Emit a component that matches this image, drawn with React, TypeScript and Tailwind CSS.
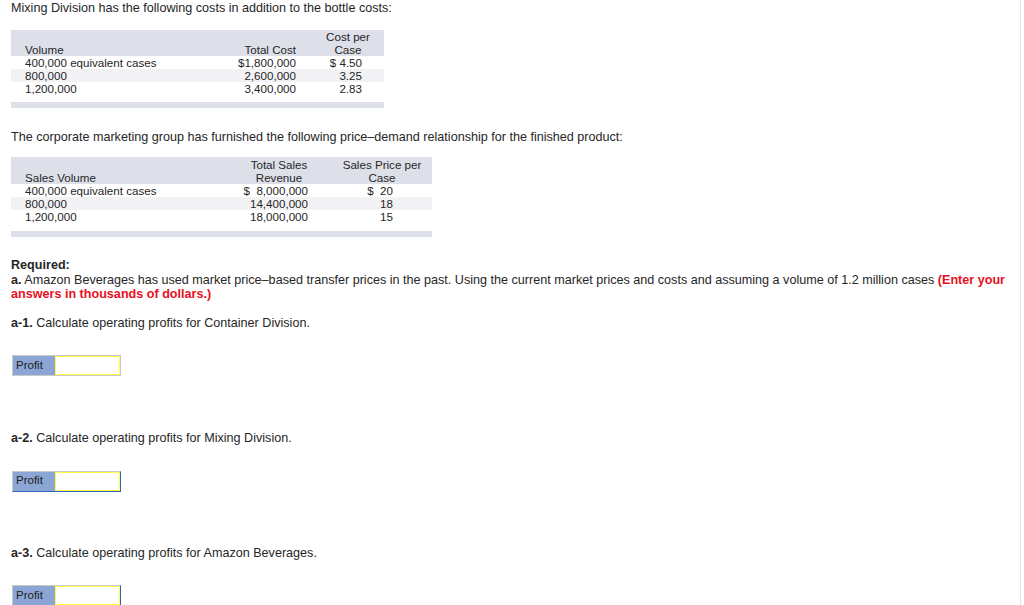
const Profit = ({ variant }: { variant: 'plain' | 'blueBottom' | 'blueRight' }) => {
  const edge =
    variant === 'blueBottom'
      ? 'border-r-[#2a63c4] border-b-[#2a63c4]'
      : variant === 'blueRight'
        ? 'border-r-[#2a63c4]'
        : ''
  return (
    <div className={`flex h-[21px] w-[109px] border border-[#c9c9c9] ${edge}`}>
      <div className="flex w-[42px] items-center bg-[#8ba6d4] pl-[3px] text-[11.5px] text-[#222]">Profit</div>
      <div className="flex-1 border border-[#ffff40] bg-white" />
    </div>
  )
}

const costRows = [
  ['400,000 equivalent cases', '$1,800,000', '$ 4.50'],
  ['800,000', '2,600,000', '3.25'],
  ['1,200,000', '3,400,000', '2.83']
]

const priceRows = [
  ['400,000 equivalent cases', '$\u00a0\u00a08,000,000', '$\u00a0\u00a020'],
  ['800,000', '14,400,000', '18'],
  ['1,200,000', '18,000,000', '15']
]

export default function App() {
  return (
    <div className="flex min-h-[605px] w-[1024px] bg-white font-['Liberation_Sans',Arial,sans-serif] text-[#262626]">
      <div className="w-[1021px] border-r border-[#e3e3e3] pl-[11px]">
        <p className="text-[12.6px] leading-[16px]">
          Mixing Division has the following costs in addition to the bottle costs:
        </p>

        <div className="mt-[14px] w-[373px] text-[11.6px] leading-[13px]">
          <div className="flex h-[26px] items-end bg-[#dde0e9]">
            <div className="w-[215px] pl-[14px]">Volume</div>
            <div className="w-[70px] text-right">Total Cost</div>
            <div className="ml-[16px] w-[72px] text-center">
              Cost per
              <br />
              Case
            </div>
          </div>
          {costRows.map((r, i) => (
            <div key={r[0]} className={`flex h-[13px] ${i === 1 ? 'bg-[#f2f2f5]' : ''}`}>
              <div className="w-[215px] pl-[14px]">{r[0]}</div>
              <div className="w-[70px] text-right">{r[1]}</div>
              <div className="ml-[16px] w-[72px] pr-[22px] text-right">{r[2]}</div>
            </div>
          ))}
          <div className="mt-[7px] h-[6px] bg-[#dde0e9]" />
        </div>

        <p className="mt-[21px] text-[12.6px] leading-[16px]">
          The corporate marketing group has furnished the following price–demand relationship for the finished product:
        </p>

        <div className="mt-[12px] w-[421px] text-[11.6px] leading-[13px]">
          <div className="flex h-[27px] items-end bg-[#dde0e9]">
            <div className="w-[229px] pl-[14px]">Sales Volume</div>
            <div className="w-[78px] text-center">
              Total Sales
              <br />
              Revenue
            </div>
            <div className="ml-[14px] w-[100px] text-center">
              Sales Price per
              <br />
              Case
            </div>
          </div>
          {priceRows.map((r, i) => (
            <div key={r[0]} className={`flex h-[13px] ${i === 1 ? 'bg-[#f2f2f5]' : ''}`}>
              <div className="w-[229px] pl-[14px]">{r[0]}</div>
              <div className="w-[78px] pr-[10px] text-right">{r[1]}</div>
              <div className="ml-[14px] w-[100px] pr-[39px] text-right">{r[2]}</div>
            </div>
          ))}
          <div className="mt-[8px] h-[6px] bg-[#dde0e9]" />
        </div>

        <div className="mt-[21px] w-[1008px] text-[12.6px] leading-[14.5px]">
          <p className="font-bold">Required:</p>
          <p>
            <b>a.</b> Amazon Beverages has used market price–based transfer prices in the past. Using the current market
            prices and costs and assuming a volume of 1.2 million cases{' '}
            <b className="text-[#e8101e]">(Enter your answers in thousands of dollars.)</b>
          </p>
        </div>

        <p className="mt-[14px] text-[12.6px] leading-[14.5px]">
          <b>a-1.</b> Calculate operating profits for Container Division.
        </p>
        <div className="mt-[25px] pl-px">
          <Profit variant="plain" />
        </div>

        <p className="mt-[55px] text-[12.6px] leading-[14.5px]">
          <b>a-2.</b> Calculate operating profits for Mixing Division.
        </p>
        <div className="mt-[25px] pl-px">
          <Profit variant="blueBottom" />
        </div>

        <p className="mt-[54px] text-[12.6px] leading-[14.5px]">
          <b>a-3.</b> Calculate operating profits for Amazon Beverages.
        </p>
        <div className="mt-[25px] pl-px">
          <Profit variant="blueRight" />
        </div>
      </div>
    </div>
  )
}
